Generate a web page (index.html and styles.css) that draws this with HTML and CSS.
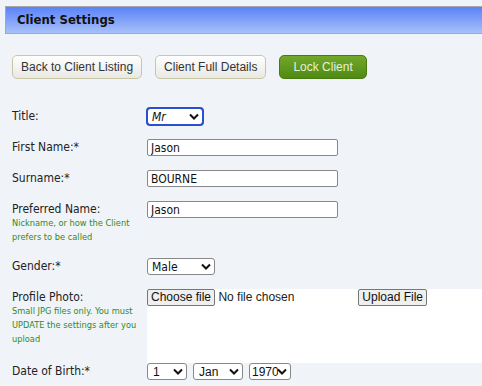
FILE: index.html
```html
<!DOCTYPE html>
<html lang="en">
<head>
    <meta charset="UTF-8">
    <title>Client Settings</title>
    <link rel="stylesheet" href="styles.css">
</head>
<body>
    <div class="page-title">Client Settings</div>
    <div class="toolbar">
        <button class="btn">Back to Client Listing</button>
        <button class="btn">Client Full Details</button>
        <button class="btn btn_green">Lock Client</button>
    </div>
    <table class="form">
        <tr>
            <td class="label">Title:</td>
            <td><select class="sel sel_title focus"><option>Mr</option></select></td>
        </tr>
        <tr>
            <td class="label">First Name:*</td>
            <td><input class="txt" type="text" value="Jason"></td>
        </tr>
        <tr>
            <td class="label">Surname:*</td>
            <td><input class="txt" type="text" value="BOURNE"></td>
        </tr>
        <tr>
            <td class="label">Preferred Name:<div class="hint">Nickname, or how the Client prefers to be called</div></td>
            <td><input class="txt" type="text" value="Jason"></td>
        </tr>
        <tr class="row_short">
            <td class="label">Gender:*</td>
            <td><select class="sel sel_gender"><option>Male</option></select></td>
        </tr>
        <tr class="row_photo">
            <td class="label">Profile Photo:<div class="hint">Small JPG files only. You must UPDATE the settings after you upload</div></td>
            <td class="upload">
                <div class="upload-row">
                    <span class="file"><span class="file-btn">Choose file</span> No file chosen</span>
                    <span class="file-btn">Upload File</span>
                </div>
            </td>
        </tr>
        <tr>
            <td class="label">Date of Birth:*</td>
            <td class="dob">
                <select class="sel arial sel_day"><option>1</option></select>
                <select class="sel arial sel_month"><option>Jan</option></select>
                <select class="sel arial sel_year"><option>1970</option></select>
            </td>
        </tr>
    </table>
</body>
</html>
```

FILE: styles.css
```css
body {
    margin: 0;
    padding: 6px 0 0 5px;
    background-color: #f0f4f8;
    font-family: "DejaVu Sans Condensed", "DejaVu Sans", sans-serif;
    font-size: 12px;
    color: #222;
}
.page-title {
    height: 26px;
    line-height: 26px;
    padding-left: 11px;
    border-top: 1px solid #a8a8a8;
    border-bottom: 1px solid #a8a8a8;
    border-left: 1px solid #a8a8a8;
    background: linear-gradient(#5a82f8, #a6c0f8);
    font-size: 13px;
    font-weight: bold;
    color: #111;
}
.toolbar {
    display: flex;
    gap: 13px;
    margin: 21px 0 0 7px;
}
.btn {
    height: 24px;
    padding: 0 8px;
    border: 1px solid #c9c6a4;
    border-radius: 5px;
    background: linear-gradient(#ffffff, #e8e8e4);
    font-family: "Liberation Sans", Arial, sans-serif;
    font-size: 12px;
    color: #333;
}
.btn_green {
    padding: 0 13px;
    border-color: #4a7a12;
    background: linear-gradient(#72a82a, #4f8a14);
    color: #e8f0dc;
}
.form {
    border-collapse: collapse;
    margin: 29px 0 0 7px;
}
.form td {
    padding: 0 0 14px 0;
    vertical-align: top;
}
.form .row_short td {
    padding-bottom: 14px;
}
.form .row_photo td {
    padding-bottom: 17px;
}
.label {
    width: 135px;
    line-height: 13px;
}
.form td.label {
    padding-top: 2px;
}
.hint {
    font-size: 9.2px;
    line-height: 14px;
    color: #2e8b1e;
}
.txt {
    box-sizing: border-box;
    width: 191px;
    height: 17px;
    margin: 0;
    padding: 0 3px;
    border: 1px solid #888;
    border-radius: 2px;
    background: #fff;
    font-family: "DejaVu Sans Condensed", "DejaVu Sans", sans-serif;
    font-size: 12px;
    color: #111;
}
.sel {
    appearance: none;
    box-sizing: border-box;
    height: 17px;
    margin: 0;
    padding: 0 12px 0 4px;
    border: 1px solid #888;
    border-radius: 3px;
    background: #fff url("data:image/svg+xml,%3Csvg xmlns='http://www.w3.org/2000/svg' width='10' height='7' viewBox='0 0 10 7'%3E%3Cpath d='M1 1.5l4 4 4-4' fill='none' stroke='%23111' stroke-width='2'/%3E%3C/svg%3E") no-repeat right 3px center;
    font-family: "DejaVu Sans Condensed", "DejaVu Sans", sans-serif;
    font-size: 12px;
    color: #111;
}
.sel_title {
    width: 56px;
}
.focus {
    outline: 2px solid #2a4fcf;
    outline-offset: -1px;
    font-style: italic;
}
.sel_gender {
    width: 68px;
}
.dob {
    display: flex;
    gap: 6px;
}
.arial {
    font-family: "Liberation Sans", Arial, sans-serif;
    font-size: 12px;
    padding-left: 5px;
}
.sel_day {
    width: 40px;
}
.sel_month {
    width: 50px;
}
.sel_year {
    width: 42px;
    padding-left: 2px;
}
.upload {
    background: #fff;
    width: 335px;
    height: 56px;
}
.form td.upload {
    padding-bottom: 0;
}
.upload-row {
    display: flex;
    justify-content: space-between;
    width: 280px;
    font-family: "Liberation Sans", Arial, sans-serif;
    font-size: 12px;
    line-height: 15px;
}
.file-btn {
    display: inline-block;
    padding: 0 3px;
    border: 1px solid #777;
    border-radius: 2px;
    background: #efefef;
    color: #111;
}
```
